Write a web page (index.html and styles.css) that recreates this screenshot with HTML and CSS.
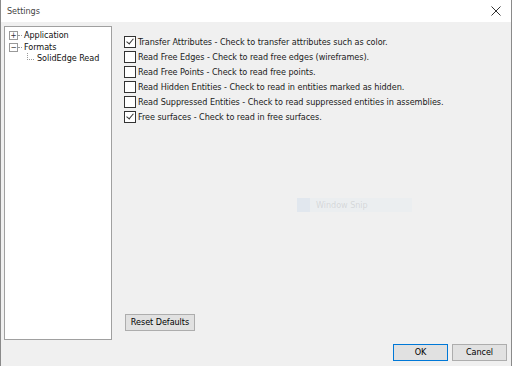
FILE: index.html
```html
<!DOCTYPE html>
<html>
<head>
<meta charset="utf-8">
<link rel="stylesheet" href="styles.css">
</head>
<body>
<div class="window">
  <div class="titlebar">
    <span class="title">Settings</span>
    <svg class="close" width="10" height="10" viewBox="0 0 10 10"><path d="M0.5 0.5 L9.5 9.5 M9.5 0.5 L0.5 9.5" stroke="#333" stroke-width="1" fill="none"/></svg>
  </div>
  <div class="body">
    <div class="main">
      <div class="tree">
        <div class="node"><span class="exp">+</span><span class="hline"></span><span class="label">Application</span></div>
        <div class="node"><span class="exp">−</span><span class="hline"></span><span class="label">Formats</span></div>
        <div class="node child"><span class="vline"></span><span class="label sel">SolidEdge Read</span></div>
      </div>
      <div class="panel">
        <div class="options">
          <label class="opt"><span class="cb checked"></span>Transfer Attributes - Check to transfer attributes such as color.</label>
          <label class="opt"><span class="cb"></span>Read Free Edges - Check to read free edges (wireframes).</label>
          <label class="opt"><span class="cb"></span>Read Free Points - Check to read free points.</label>
          <label class="opt"><span class="cb"></span>Read Hidden Entities - Check to read in entities marked as hidden.</label>
          <label class="opt"><span class="cb"></span>Read Suppressed Entities - Check to read suppressed entities in assemblies.</label>
          <label class="opt"><span class="cb checked"></span>Free surfaces - Check to read in free surfaces.</label>
        </div>
        <div class="reset"><button class="btn">Reset Defaults</button></div>
      </div>
    </div>
    <div class="footer">
      <button class="btn dlg default">OK</button>
      <button class="btn dlg">Cancel</button>
    </div>
  </div>
  <div class="snip"><span class="snipicon"></span>Window Snip</div>
</div>
</body>
</html>
```
FILE: styles.css
```css
html, body {
  margin: 0;
  padding: 0;
  width: 512px;
  height: 366px;
  overflow: hidden;
}
body {
  font-family: "DejaVu Sans Condensed", "DejaVu Sans", sans-serif;
  font-size: 9px;
  letter-spacing: -0.05px;
  color: #000;
}
.window {
  position: relative;
  width: 512px;
  height: 366px;
  box-sizing: border-box;
  border-left: 1px solid #8a8a8a;
  border-right: 1px solid #8a8a8a;
  display: flex;
  flex-direction: column;
  background: #f0f0f0;
}
.titlebar {
  height: 22px;
  background: #fff;
  display: flex;
  align-items: center;
  justify-content: space-between;
  padding: 0 10px 0 6px;
  flex: none;
}
.title {
  color: #444;
}
.body {
  flex: 1;
  display: flex;
  flex-direction: column;
  padding: 4px 4px 4px 3px;
}
.main {
  display: flex;
  height: 314px;
}
.tree {
  width: 108px;
  background: #fff;
  border: 1px solid #a0a0a0;
  padding: 3px 0 0 4px;
  box-sizing: border-box;
  flex: none;
}
.node {
  display: flex;
  align-items: center;
  height: 11.5px;
  line-height: 11px;
  color: #111;
  white-space: nowrap;
}
.exp {
  width: 7px;
  height: 7px;
  border: 1px solid #999;
  font-size: 8px;
  line-height: 7px;
  text-align: center;
  color: #333;
  box-sizing: content-box;
  flex: none;
}
.hline {
  width: 4px;
  border-top: 1px dotted #999;
  flex: none;
}
.label {
  padding-left: 2px;
}
.child {
  padding-left: 18px;
}
.child .label {
  padding-left: 3px;
}
.vline {
  width: 6px;
  height: 6px;
  border-left: 1px dotted #999;
  border-bottom: 1px dotted #999;
  margin-top: -5px;
  flex: none;
}
.panel {
  flex: 1;
  display: flex;
  flex-direction: column;
  justify-content: space-between;
  padding: 8px 0 9px 12px;
}
.options {
  display: flex;
  flex-direction: column;
}
.opt {
  display: flex;
  align-items: center;
  height: 15px;
  color: #1a1a1a;
  white-space: nowrap;
}
.cb {
  width: 10px;
  height: 10px;
  border: 1px solid #333;
  background: #fff;
  margin-right: 2px;
  flex: none;
  position: relative;
}
.cb.checked::after {
  content: "";
  position: absolute;
  left: 3px;
  top: 0px;
  width: 3px;
  height: 6px;
  border-right: 1px solid #333;
  border-bottom: 1px solid #333;
  transform: rotate(40deg);
}
.reset {
  display: flex;
  padding-left: 1px;
}
.btn {
  font-family: inherit;
  font-size: 9px;
  letter-spacing: -0.05px;
  background: #e1e1e1;
  border: 1px solid #adadad;
  color: #000;
  padding: 0 5px;
  height: 17px;
  line-height: 15px;
  margin: 0;
  white-space: nowrap;
}
.reset .btn {
  width: 70px;
  padding: 0;
}
.footer {
  display: flex;
  justify-content: flex-end;
  gap: 4px;
  padding-top: 4px;
}
.dlg {
  width: 55px;
}
.default {
  border-color: #0078d7;
}
.snip {
  position: absolute;
  left: 296px;
  top: 198px;
  width: 115px;
  height: 14px;
  background: rgba(220,230,240,0.25);
  color: rgba(160,160,160,0.3);
  font-size: 9px;
  display: flex;
  align-items: center;
  gap: 6px;
}
.snipicon {
  width: 13px;
  height: 14px;
  background: rgba(210,220,235,0.4);
}
```
